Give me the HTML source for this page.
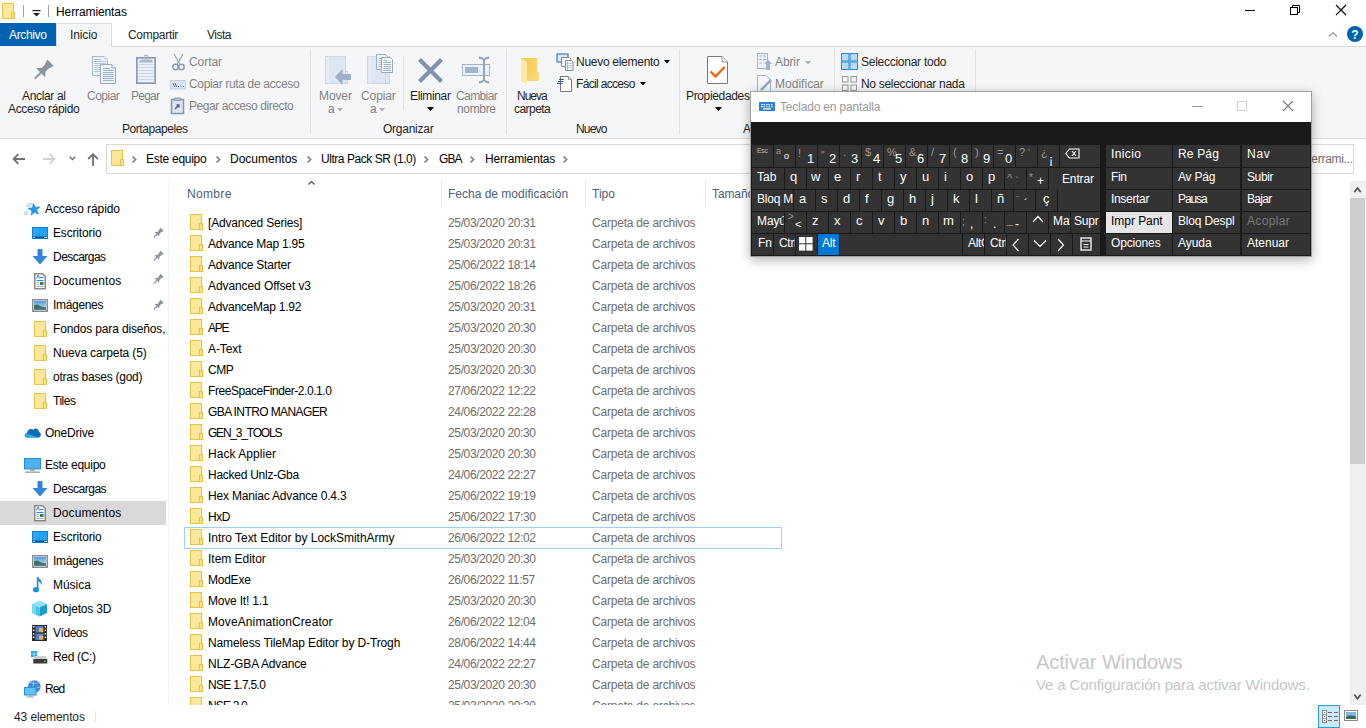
<!DOCTYPE html>
<html><head><meta charset="utf-8"><style>
html,body{margin:0;padding:0;}
body{width:1366px;height:728px;overflow:hidden;position:relative;background:#fff;font-family:"Liberation Sans",sans-serif;}
.t{position:absolute;white-space:nowrap;line-height:1;}
.r{position:absolute;}
.s{position:absolute;overflow:visible;}
</style></head><body>
<svg class="s" style="left:2px;top:3px;" width="13" height="16" viewBox="0 0 13 16"><rect x="0.5" y="0.5" width="11" height="15" fill="#fde89a" stroke="#e8c246"/><rect x="9.5" y="9.5" width="3" height="6" fill="#fde08a" stroke="#e8c246" stroke-width="1"/></svg>
<div class="r" style="left:23px;top:5px;width:1px;height:12px;background:#a0a0a0;"></div>
<svg class="s" style="left:32px;top:10px;" width="9" height="7" viewBox="0 0 9 7"><rect x="0.5" y="0" width="8" height="1.2" fill="#222"/><path d="M1 3 L8 3 L4.5 6.5 Z" fill="#222"/></svg>
<div class="r" style="left:48px;top:5px;width:1px;height:12px;background:#a0a0a0;"></div>
<div class="t" style="left:56px;top:6px;font-size:12px;color:#000;letter-spacing:-0.1px;">Herramientas</div>
<div class="r" style="left:1245px;top:10px;width:10px;height:1px;background:#000;"></div>
<svg class="s" style="left:1289px;top:4px;" width="12" height="12" viewBox="0 0 12 12"><rect x="1.5" y="3.5" width="7" height="7" fill="none" stroke="#000"/><path d="M3.5 3.5 V1.5 H10.5 V8.5 H8.5" fill="none" stroke="#000"/></svg>
<svg class="s" style="left:1335px;top:4px;" width="12" height="12" viewBox="0 0 12 12"><path d="M1 1 L11 11 M11 1 L1 11" stroke="#000" stroke-width="1.1"/></svg>
<div class="r" style="left:0px;top:23px;width:56px;height:23px;background:#0063b1;"></div>
<div class="t" style="left:9px;top:29px;font-size:12px;color:#fff;letter-spacing:-0.35px;">Archivo</div>
<div class="r" style="left:56px;top:23px;width:56px;height:24px;background:#f5f6f7;border:1px solid #dadbdc;border-bottom:none;box-sizing:border-box;"></div>
<div class="t" style="left:70px;top:29px;font-size:12px;color:#262626;letter-spacing:-0.1px;">Inicio</div>
<div class="t" style="left:128px;top:29px;font-size:12px;color:#262626;letter-spacing:-0.3px;">Compartir</div>
<div class="t" style="left:207px;top:29px;font-size:12px;color:#262626;letter-spacing:-0.5px;">Vista</div>
<div class="r" style="left:112px;top:46px;width:1254px;height:1px;background:#dadbdc;"></div>
<svg class="s" style="left:1328px;top:31px;" width="10" height="7" viewBox="0 0 10 7"><path d="M1 5.5 L5 1.5 L9 5.5" fill="none" stroke="#9a9a9a" stroke-width="1.2"/></svg>
<svg class="s" style="left:1347px;top:26px;" width="16" height="16" viewBox="0 0 16 16"><circle cx="8" cy="8" r="8" fill="#0063b1"/><text x="8" y="12.5" font-family="Liberation Sans" font-weight="bold" font-size="12" fill="#fff" text-anchor="middle">?</text></svg>
<div class="r" style="left:0px;top:47px;width:1366px;height:91px;background:#f5f6f7;"></div>
<div class="r" style="left:0px;top:138px;width:1366px;height:1px;background:#dadbdc;"></div>
<div class="r" style="left:310px;top:49px;width:1px;height:85px;background:#e2e3e4;"></div>
<div class="r" style="left:506px;top:49px;width:1px;height:85px;background:#e2e3e4;"></div>
<div class="r" style="left:679px;top:49px;width:1px;height:85px;background:#e2e3e4;"></div>
<div class="r" style="left:834px;top:49px;width:1px;height:85px;background:#e2e3e4;"></div>
<div class="r" style="left:975px;top:49px;width:1px;height:85px;background:#e2e3e4;"></div>
<div class="r" style="left:403px;top:56px;width:1px;height:54px;background:#e2e3e4;"></div>
<svg class="s" style="left:30px;top:56px;" width="26" height="28" viewBox="0 0 26 28"><g transform="translate(4.6 22.8) rotate(45)" fill="#8b959c"><rect x="-1" y="-9.5" width="2" height="9.5" rx="1"/><path d="M-6.3 -8.6 L6.3 -8.6 L2.7 -12.8 L2.7 -16.8 L4.6 -22.6 L-4.6 -22.6 L-2.7 -16.8 L-2.7 -12.8 Z"/></g></svg>
<div class="t" style="left:22px;top:90px;font-size:12px;color:#1f1f1f;letter-spacing:-0.35px;">Anclar al</div>
<div class="t" style="left:8px;top:103px;font-size:12px;color:#1f1f1f;letter-spacing:-0.37px;">Acceso rápido</div>
<svg class="s" style="left:91px;top:55px;" width="27" height="30" viewBox="0 0 27 30"><path d="M1.5 1.5 H13 L16.5 5 V20.5 H1.5 Z" fill="#eef3fa" stroke="#a6b6cf"/><g stroke="#b4c3d9"><path d="M3.5 4.5 H10 M3.5 6.5 H14.5 M3.5 8.5 H14.5 M3.5 10.5 H14.5 M3.5 12.5 H14.5 M3.5 14.5 H14.5 M3.5 16.5 H14.5"/></g><path d="M9.5 9.5 H21 L24.5 13 V28.5 H9.5 Z" fill="#eef3fa" stroke="#97a8c2"/><path d="M21 9.5 V13 H24.5" fill="#fff" stroke="#97a8c2"/><g stroke="#9db0cb"><path d="M12 13.5 H19 M12 15.5 H22.5 M12 17.5 H22.5 M12 19.5 H22.5 M12 21.5 H22.5 M12 23.5 H22.5 M12 25.5 H22.5"/></g></svg>
<div class="t" style="left:87px;top:90px;font-size:12px;color:#838383;letter-spacing:-0.5px;">Copiar</div>
<svg class="s" style="left:135px;top:54px;" width="22" height="31" viewBox="0 0 22 31"><rect x="1.8" y="3.8" width="18.4" height="25.4" fill="#e9eff8" stroke="#8797b3" stroke-width="1.6"/><path d="M4.5 8 H17.5 L16 6 H6 Z" fill="#b9c5d8" stroke="#98a7c0" stroke-width="0.8"/><circle cx="11" cy="3" r="1.8" fill="none" stroke="#a7b4c9" stroke-width="1.2"/><g stroke="#cdd7e6"><path d="M3.5 10.5 H18.5 M3.5 13.5 H18.5 M3.5 16.5 H18.5 M3.5 19.5 H18.5 M3.5 22.5 H18.5 M3.5 25.5 H18.5"/></g></svg>
<div class="t" style="left:131px;top:90px;font-size:12px;color:#838383;letter-spacing:-0.75px;">Pegar</div>
<svg class="s" style="left:171px;top:53px;" width="15" height="18" viewBox="0 0 15 18"><path d="M3 1 L9.5 12 M12 1 L5.5 12" stroke="#9aa6b8" stroke-width="1.3" fill="none"/><circle cx="4.5" cy="14" r="2.7" fill="none" stroke="#8d9bb0" stroke-width="1.5"/><circle cx="10.5" cy="14" r="2.7" fill="none" stroke="#8d9bb0" stroke-width="1.5"/></svg>
<div class="t" style="left:189px;top:56px;font-size:12px;color:#838383;letter-spacing:-0.05px;">Cortar</div>
<svg class="s" style="left:170px;top:80px;" width="16" height="10" viewBox="0 0 16 10"><rect x="0.5" y="0.5" width="15" height="8.5" fill="#dce5f2" stroke="#c0cde0"/><path d="M3 3 L4.5 7 M5 3 L6.5 7" stroke="#58698a" stroke-width="0.9"/><path d="M8 6.5 H9 M10.5 6.5 H11.5 M13 6.5 H14" stroke="#58698a"/></svg>
<div class="t" style="left:189px;top:78px;font-size:12px;color:#838383;letter-spacing:-0.34px;">Copiar ruta de acceso</div>
<svg class="s" style="left:170px;top:97px;" width="16" height="18" viewBox="0 0 16 18"><rect x="1.5" y="2.5" width="12" height="14" fill="#dce4f0" stroke="#8596b0" stroke-width="1.5"/><rect x="4.5" y="1" width="6" height="2.5" fill="#b7c3d6" stroke="#8596b0" stroke-width="0.8"/><path d="M5 12 L9 8 M6.5 8 H9 V10.5" stroke="#4b5e80" stroke-width="1.3" fill="none"/></svg>
<div class="t" style="left:189px;top:100px;font-size:12px;color:#838383;letter-spacing:-0.42px;">Pegar acceso directo</div>
<div class="t" style="left:122px;top:123px;font-size:12px;color:#1f1f1f;letter-spacing:-0.44px;">Portapapeles</div>
<svg class="s" style="left:324px;top:55px;" width="28" height="31" viewBox="0 0 28 31"><rect x="1.5" y="1.5" width="20" height="27" fill="#dde6f2" stroke="#cad7e8"/><path d="M4 2 V28" stroke="#e9eff7" stroke-width="1.5"/><rect x="21.5" y="16.5" width="2" height="12" fill="#dde6f2" stroke="#cad7e8"/><path d="M11 22 L18.5 14 V19 H27 V25 H18.5 V30 Z" fill="#a1b0c8"/></svg>
<div class="t" style="left:319px;top:90px;font-size:12px;color:#838383;letter-spacing:-0.1px;">Mover</div>
<div class="t" style="left:328px;top:103px;font-size:12px;color:#838383;">a</div>
<svg class="s" style="left:337px;top:108px;" width="6" height="4" viewBox="0 0 6 4"><path d="M0 0 H6 L3 3.5 Z" fill="#b0b0b0"/></svg>
<svg class="s" style="left:366px;top:53px;" width="28" height="32" viewBox="0 0 28 32"><rect x="1.5" y="3.5" width="22" height="27" fill="#dde6f2" stroke="#cad7e8"/><path d="M4 4 V30" stroke="#e9eff7" stroke-width="1.5"/><path d="M19.5 4 V30" stroke="#cad7e8"/><path d="M10.5 1.5 H19.5 L21.5 3.5 V16.5 H10.5 Z" fill="#eef3fa" stroke="#9fb0c8"/><g stroke="#b8c6da"><path d="M12.5 5.5 H19 M12.5 7.5 H19 M12.5 9.5 H19 M12.5 11.5 H19 M12.5 13.5 H19"/></g><path d="M15.5 4.5 H24.5 L26.5 6.5 V19.5 H15.5 Z" fill="#f4f7fb" stroke="#97a8c2"/><g stroke="#9db0cb"><path d="M17.5 7.5 H21 M17.5 9.5 H25 M17.5 11.5 H25 M17.5 13.5 H25 M17.5 15.5 H25 M17.5 17.5 H25"/></g></svg>
<div class="t" style="left:361px;top:90px;font-size:12px;color:#838383;letter-spacing:-0.1px;">Copiar</div>
<div class="t" style="left:370px;top:103px;font-size:12px;color:#838383;">a</div>
<svg class="s" style="left:379px;top:108px;" width="6" height="4" viewBox="0 0 6 4"><path d="M0 0 H6 L3 3.5 Z" fill="#b0b0b0"/></svg>
<svg class="s" style="left:417px;top:57px;" width="27" height="27" viewBox="0 0 27 27"><path d="M2.5 2.5 L24.5 24.5 M24.5 2.5 L2.5 24.5" stroke="#8192b0" stroke-width="4.2"/></svg>
<div class="t" style="left:410px;top:90px;font-size:12px;color:#1f1f1f;letter-spacing:-0.35px;">Eliminar</div>
<svg class="s" style="left:427px;top:107px;" width="7" height="4" viewBox="0 0 7 4"><path d="M0 0 H7 L3.5 4 Z" fill="#000"/></svg>
<svg class="s" style="left:461px;top:56px;" width="30" height="28" viewBox="0 0 30 28"><rect x="1.5" y="8.5" width="27" height="11" fill="#eaf1fb" stroke="#a3b3cc"/><rect x="4" y="11" width="13" height="6" fill="#a3b3cc"/><path d="M18 1.5 Q21 1.5 23 4 Q25 1.5 28 1.5 M23 4 V24 M18 26.5 Q21 26.5 23 24 Q25 26.5 28 26.5" stroke="#8d9dba" stroke-width="1.8" fill="none"/></svg>
<div class="t" style="left:456px;top:90px;font-size:12px;color:#838383;letter-spacing:-0.6px;">Cambiar</div>
<div class="t" style="left:457px;top:103px;font-size:12px;color:#838383;letter-spacing:-0.34px;">nombre</div>
<div class="t" style="left:383px;top:123px;font-size:12px;color:#1f1f1f;letter-spacing:-0.25px;">Organizar</div>
<svg class="s" style="left:519px;top:57px;" width="22" height="29" viewBox="0 0 22 29"><defs><linearGradient id="gf" x1="0" y1="0" x2="1" y2="1"><stop offset="0" stop-color="#f3c84e"/><stop offset="1" stop-color="#fbdc7c"/></linearGradient></defs><path d="M2 1 H18 V14 L20 16 V24 H2 Z" fill="url(#gf)"/><path d="M2 1 L8 5 V27.5 L2 24 Z" fill="#fde9a3"/></svg>
<div class="t" style="left:517px;top:90px;font-size:12px;color:#1f1f1f;letter-spacing:-1.0px;">Nueva</div>
<div class="t" style="left:514px;top:103px;font-size:12px;color:#1f1f1f;letter-spacing:-0.55px;">carpeta</div>
<svg class="s" style="left:556px;top:53px;" width="18" height="18" viewBox="0 0 18 18"><rect x="1" y="1" width="11" height="8" fill="#dbe9f6" stroke="#3a7fc0" stroke-width="1.2"/><path d="M5.5 4.5 H13.5 L15 6 V13.5 H5.5 Z" fill="#fff" stroke="#8a8a8a"/><path d="M9.5 7.5 H15.5 L17 9 V17.5 H9.5 Z" fill="#fff" stroke="#8a8a8a"/><path d="M10.5 10.5 H16 M10.5 12.5 H16 M10.5 14.5 H16" stroke="#9cc3ea" stroke-width="0.8"/><path d="M11.5 8.5 V17" stroke="#e88" stroke-width="0.8"/></svg>
<div class="t" style="left:576px;top:56px;font-size:12px;color:#1f1f1f;letter-spacing:-0.28px;">Nuevo elemento</div>
<svg class="s" style="left:664px;top:60px;" width="6" height="4" viewBox="0 0 6 4"><path d="M0 0 H6 L3 3.5 Z" fill="#000"/></svg>
<svg class="s" style="left:556px;top:75px;" width="17" height="18" viewBox="0 0 17 18"><path d="M4.5 1.5 H12.5 L15.5 4.5 V16.5 H4.5 Z" fill="#fff" stroke="#777"/><path d="M12.5 1.5 V4.5 H15.5" fill="#eee" stroke="#999"/><path d="M3 4.5 H8 M2 6.5 H7.5 M1 8.5 H6.5" stroke="#1e5fb4" stroke-width="1.2"/></svg>
<div class="t" style="left:576px;top:78px;font-size:12px;color:#1f1f1f;letter-spacing:-0.67px;">Fácil acceso</div>
<svg class="s" style="left:640px;top:82px;" width="6" height="4" viewBox="0 0 6 4"><path d="M0 0 H6 L3 3.5 Z" fill="#000"/></svg>
<div class="t" style="left:576px;top:123px;font-size:12px;color:#1f1f1f;letter-spacing:-0.8px;">Nuevo</div>
<svg class="s" style="left:707px;top:56px;" width="21" height="28" viewBox="0 0 21 28"><path d="M0.5 0.5 H15 L20.5 6 V27.5 H0.5 Z" fill="#fff" stroke="#7a7a7a"/><path d="M15 0.5 V6 H20.5" fill="#eee" stroke="#9a9a9a"/><path d="M3.5 15.5 L8.5 20.5 L17.5 11" fill="none" stroke="#f7630c" stroke-width="2.4"/></svg>
<div class="t" style="left:686px;top:90px;font-size:12px;color:#1f1f1f;letter-spacing:-0.35px;">Propiedades</div>
<svg class="s" style="left:715px;top:107px;" width="7" height="4" viewBox="0 0 7 4"><path d="M0 0 H7 L3.5 4 Z" fill="#000"/></svg>
<svg class="s" style="left:757px;top:53px;" width="16" height="18" viewBox="0 0 16 18"><rect x="0.5" y="0.5" width="10" height="15" fill="#eef2f7" stroke="#aab6c8"/><path d="M2.5 3 H4.5 M6 3 H9 M2.5 6.5 H4.5 M6 6.5 H9 M2.5 10 H4.5" stroke="#9aa7bb"/><path d="M9 17 V11 H7 L11 6.5 L15 11 H13 V17 Z" fill="#a5b3c8"/></svg>
<div class="t" style="left:775px;top:56px;font-size:12px;color:#838383;letter-spacing:-0.1px;">Abrir</div>
<svg class="s" style="left:805px;top:61px;" width="6" height="4" viewBox="0 0 6 4"><path d="M0 0 H6 L3 3.5 Z" fill="#b0b0b0"/></svg>
<svg class="s" style="left:757px;top:75px;" width="16" height="18" viewBox="0 0 16 18"><path d="M0.5 0.5 H9 L13.5 5 V17.5 H0.5 Z" fill="#f4f6fa" stroke="#aab6c8"/><path d="M4 15 L14 5" stroke="#9aa7bb" stroke-width="2.5"/></svg>
<div class="t" style="left:775px;top:78px;font-size:12px;color:#838383;letter-spacing:0.02px;">Modificar</div>
<div class="t" style="left:743px;top:123px;font-size:12px;color:#1f1f1f;">A</div>
<svg class="s" style="left:841px;top:53px;" width="18" height="18" viewBox="0 0 18 18"><rect x="0.5" y="0.5" width="7.5" height="7.5" fill="#b8dcf8" stroke="#2e8ae0"/><rect x="9" y="0.5" width="7.5" height="7.5" fill="#b8dcf8" stroke="#2e8ae0"/><rect x="0.5" y="9" width="7.5" height="7.5" fill="#b8dcf8" stroke="#2e8ae0"/><rect x="9" y="9" width="7.5" height="7.5" fill="#b8dcf8" stroke="#2e8ae0"/></svg>
<div class="t" style="left:861px;top:56px;font-size:12px;color:#1f1f1f;letter-spacing:-0.26px;">Seleccionar todo</div>
<svg class="s" style="left:841px;top:75px;" width="18" height="18" viewBox="0 0 18 18"><g fill="none" stroke="#9a9a9a"><rect x="1.5" y="1.5" width="5.5" height="5.5"/><rect x="10" y="1.5" width="5.5" height="5.5"/><rect x="1.5" y="10" width="5.5" height="5.5"/><rect x="10" y="10" width="5.5" height="5.5"/></g></svg>
<div class="t" style="left:861px;top:78px;font-size:12px;color:#1f1f1f;letter-spacing:-0.31px;">No seleccionar nada</div>
<svg class="s" style="left:12px;top:152px;" width="15" height="14" viewBox="0 0 15 14"><path d="M6.3 2.2 L1.6 7 L6.3 11.8 M1.6 7 H13" fill="none" stroke="#707070" stroke-width="1.8"/></svg>
<svg class="s" style="left:42px;top:152px;" width="15" height="14" viewBox="0 0 15 14"><path d="M7.7 2.2 L12.4 7 L7.7 11.8 M12.4 7 H1" fill="none" stroke="#d2d2d2" stroke-width="1.8"/></svg>
<svg class="s" style="left:68px;top:155px;" width="9" height="7" viewBox="0 0 9 7"><path d="M1.8 1.8 L4.5 4.5 L7.2 1.8" fill="none" stroke="#707070" stroke-width="1.5"/></svg>
<svg class="s" style="left:86px;top:152px;" width="14" height="15" viewBox="0 0 14 15"><path d="M2.2 7 L7 2.2 L11.8 7 M7 2.2 V14" fill="none" stroke="#707070" stroke-width="1.8"/></svg>
<div class="r" style="left:106px;top:144px;width:1170px;height:30px;background:#fff;border:1px solid #d9d9d9;box-sizing:border-box;"></div>
<svg class="s" style="left:111px;top:150px;" width="13" height="16" viewBox="0 0 13 16"><rect x="0.5" y="0.5" width="11" height="15" fill="#fde89a" stroke="#e8c246"/><rect x="9.5" y="9.5" width="3" height="6" fill="#fde08a" stroke="#e8c246" stroke-width="1"/></svg>
<svg class="s" style="left:131px;top:155px;" width="8" height="9" viewBox="0 0 8 9"><path d="M1.5 1.5 L4.6 4.5 L1.5 7.5" fill="none" stroke="#808080" stroke-width="1.7"/></svg>
<svg class="s" style="left:215px;top:155px;" width="8" height="9" viewBox="0 0 8 9"><path d="M1.5 1.5 L4.6 4.5 L1.5 7.5" fill="none" stroke="#808080" stroke-width="1.7"/></svg>
<svg class="s" style="left:306px;top:155px;" width="8" height="9" viewBox="0 0 8 9"><path d="M1.5 1.5 L4.6 4.5 L1.5 7.5" fill="none" stroke="#808080" stroke-width="1.7"/></svg>
<svg class="s" style="left:423px;top:155px;" width="8" height="9" viewBox="0 0 8 9"><path d="M1.5 1.5 L4.6 4.5 L1.5 7.5" fill="none" stroke="#808080" stroke-width="1.7"/></svg>
<svg class="s" style="left:469px;top:155px;" width="8" height="9" viewBox="0 0 8 9"><path d="M1.5 1.5 L4.6 4.5 L1.5 7.5" fill="none" stroke="#808080" stroke-width="1.7"/></svg>
<svg class="s" style="left:562px;top:155px;" width="8" height="9" viewBox="0 0 8 9"><path d="M1.5 1.5 L4.6 4.5 L1.5 7.5" fill="none" stroke="#808080" stroke-width="1.7"/></svg>
<div class="t" style="left:146px;top:153px;font-size:12px;color:#000;letter-spacing:-0.27px;">Este equipo</div>
<div class="t" style="left:230px;top:153px;font-size:12px;color:#000;letter-spacing:-0.0px;">Documentos</div>
<div class="t" style="left:321px;top:153px;font-size:12px;color:#000;letter-spacing:-0.45px;">Ultra Pack SR (1.0)</div>
<div class="t" style="left:439px;top:153px;font-size:12px;color:#000;letter-spacing:-0.9px;">GBA</div>
<div class="t" style="left:485px;top:153px;font-size:12px;color:#000;letter-spacing:-0.15px;">Herramientas</div>
<div class="r" style="left:1283px;top:144px;width:71px;height:30px;background:#fff;border:1px solid #d9d9d9;box-sizing:border-box;"></div>
<div class="t" style="left:1303px;top:153px;font-size:12px;color:#6d6d6d;letter-spacing:-0.3px;">Herrami...</div>
<div class="r" style="left:0px;top:501px;width:166px;height:24px;background:#d9d9d9;"></div>
<div class="r" style="left:168px;top:181px;width:1px;height:524px;background:#f3f3f3;"></div>
<svg class="s" style="left:24px;top:201px;" width="17" height="15" viewBox="0 0 17 15"><path d="M9.32 2.36 L11.42 6.30 L15.86 5.84 L12.76 9.05 L14.58 13.13 L10.56 11.17 L7.24 14.16 L7.86 9.74 L4.00 7.51 L8.39 6.73 Z" fill="#1f9bf0" stroke="#1a86d6" stroke-width="0.6"/><path d="M3 3 H8 M2 5 H6.5 M0.5 11 H4.5 M0 13 H4" stroke="#7cc4f4" stroke-width="0.9"/></svg>
<div class="t" style="left:45px;top:203px;font-size:12px;color:#000;letter-spacing:-0.09px;">Acceso rápido</div>
<svg class="s" style="left:32px;top:227px;" width="16" height="13" viewBox="0 0 16 13"><rect x="0.5" y="0.5" width="15" height="11" fill="#1ea2f6" stroke="#137fd0"/><path d="M1 1 L8 1 L3 11 H1 Z" fill="#3cb0f8" opacity="0.5"/><rect x="1" y="9.5" width="14" height="2" fill="#0b5a9c"/><g fill="#fff"><rect x="1.5" y="10" width="1" height="1"/><rect x="12.5" y="10" width="1" height="1"/><rect x="14" y="10" width="1" height="1"/></g></svg>
<div class="t" style="left:53px;top:227px;font-size:12px;color:#000;letter-spacing:-0.16px;">Escritorio</div>
<svg class="s" style="left:153px;top:228px;" width="11" height="11" viewBox="0 0 11 11"><g transform="translate(0.7 9.6) rotate(45) scale(0.52)" fill="#8b959c"><rect x="-1.1" y="-9.5" width="2.2" height="9.5" rx="1"/><path d="M-6.3 -8.6 L6.3 -8.6 L2.7 -12.8 L2.7 -16.8 L4.6 -22.6 L-4.6 -22.6 L-2.7 -16.8 L-2.7 -12.8 Z"/></g></svg>
<svg class="s" style="left:32px;top:249px;" width="16" height="16" viewBox="0 0 16 16"><path d="M5.5 0 H10.5 V7 H15.5 L8 15.5 L0.5 7 H5.5 Z" fill="#2f86da"/></svg>
<div class="t" style="left:53px;top:251px;font-size:12px;color:#000;letter-spacing:-0.53px;">Descargas</div>
<svg class="s" style="left:153px;top:251px;" width="11" height="11" viewBox="0 0 11 11"><g transform="translate(0.7 9.6) rotate(45) scale(0.52)" fill="#8b959c"><rect x="-1.1" y="-9.5" width="2.2" height="9.5" rx="1"/><path d="M-6.3 -8.6 L6.3 -8.6 L2.7 -12.8 L2.7 -16.8 L4.6 -22.6 L-4.6 -22.6 L-2.7 -16.8 L-2.7 -12.8 Z"/></g></svg>
<svg class="s" style="left:34px;top:273px;" width="12" height="17" viewBox="0 0 12 17"><path d="M0.75 0.75 H8.5 L11.25 3.5 V15.75 H0.75 Z" fill="#fff" stroke="#8a8a8a" stroke-width="1.5"/><path d="M2.5 5.5 L4 2 L5.5 5.5" fill="none" stroke="#1e88e5" stroke-width="1"/><path d="M6 4.5 H9.5" stroke="#1e88e5"/><path d="M2.5 7.5 H9.5" stroke="#1e88e5" stroke-width="1.1"/><path d="M2.5 9.5 H5 M2.5 11.5 H5 M2.5 13.5 H9.5" stroke="#aaa"/><rect x="6" y="9" width="3.5" height="3" fill="#3f7a5a"/></svg>
<div class="t" style="left:53px;top:275px;font-size:12px;color:#000;letter-spacing:0.1px;">Documentos</div>
<svg class="s" style="left:153px;top:274px;" width="11" height="11" viewBox="0 0 11 11"><g transform="translate(0.7 9.6) rotate(45) scale(0.52)" fill="#8b959c"><rect x="-1.1" y="-9.5" width="2.2" height="9.5" rx="1"/><path d="M-6.3 -8.6 L6.3 -8.6 L2.7 -12.8 L2.7 -16.8 L4.6 -22.6 L-4.6 -22.6 L-2.7 -16.8 L-2.7 -12.8 Z"/></g></svg>
<svg class="s" style="left:32px;top:299px;" width="16" height="13" viewBox="0 0 16 13"><rect x="0.75" y="0.75" width="14.5" height="11.5" fill="#fff" stroke="#8a8a8a" stroke-width="1.5"/><defs><linearGradient id="sky" x1="0" y1="0" x2="0" y2="1"><stop offset="0" stop-color="#4a9be8"/><stop offset="1" stop-color="#d8ecf8"/></linearGradient></defs><rect x="2" y="2" width="12" height="9" fill="url(#sky)"/><path d="M2 6.5 Q5 4.5 8 7 Q11 8.5 14 8 V11 H2 Z" fill="#3f7752"/><rect x="2" y="9.5" width="12" height="1.5" fill="#4a78b0"/></svg>
<div class="t" style="left:53px;top:299px;font-size:12px;color:#000;letter-spacing:-0.32px;">Imágenes</div>
<svg class="s" style="left:153px;top:300px;" width="11" height="11" viewBox="0 0 11 11"><g transform="translate(0.7 9.6) rotate(45) scale(0.52)" fill="#8b959c"><rect x="-1.1" y="-9.5" width="2.2" height="9.5" rx="1"/><path d="M-6.3 -8.6 L6.3 -8.6 L2.7 -12.8 L2.7 -16.8 L4.6 -22.6 L-4.6 -22.6 L-2.7 -16.8 L-2.7 -12.8 Z"/></g></svg>
<svg class="s" style="left:34px;top:321px;" width="13" height="16" viewBox="0 0 13 16"><rect x="0.5" y="0.5" width="11" height="15" fill="#fde89a" stroke="#e8c246"/><rect x="9.5" y="9.5" width="3" height="6" fill="#fde08a" stroke="#e8c246" stroke-width="1"/></svg>
<div class="t" style="left:53px;top:323px;font-size:12px;color:#000;letter-spacing:-0.15px;">Fondos para diseños,</div>
<svg class="s" style="left:34px;top:345px;" width="13" height="16" viewBox="0 0 13 16"><rect x="0.5" y="0.5" width="11" height="15" fill="#fde89a" stroke="#e8c246"/><rect x="9.5" y="9.5" width="3" height="6" fill="#fde08a" stroke="#e8c246" stroke-width="1"/></svg>
<div class="t" style="left:53px;top:347px;font-size:12px;color:#000;letter-spacing:-0.15px;">Nueva carpeta (5)</div>
<svg class="s" style="left:34px;top:369px;" width="13" height="16" viewBox="0 0 13 16"><rect x="0.5" y="0.5" width="11" height="15" fill="#fde89a" stroke="#e8c246"/><rect x="9.5" y="9.5" width="3" height="6" fill="#fde08a" stroke="#e8c246" stroke-width="1"/></svg>
<div class="t" style="left:53px;top:371px;font-size:12px;color:#000;letter-spacing:-0.24px;">otras bases (god)</div>
<svg class="s" style="left:34px;top:393px;" width="13" height="16" viewBox="0 0 13 16"><rect x="0.5" y="0.5" width="11" height="15" fill="#fde89a" stroke="#e8c246"/><rect x="9.5" y="9.5" width="3" height="6" fill="#fde08a" stroke="#e8c246" stroke-width="1"/></svg>
<div class="t" style="left:53px;top:395px;font-size:12px;color:#000;letter-spacing:-0.5px;">Tiles</div>
<svg class="s" style="left:24px;top:427px;" width="17" height="11" viewBox="0 0 17 11"><path d="M3 10.5 C0 10.5 0 6 3 6 C3.5 2.5 7 1 9.5 2.8 C11 0.5 15 1.5 15 5 C17.5 5.5 17.5 10.5 14.5 10.5 Z" fill="#0f6cbd"/><path d="M3 10.5 C0 10.5 0 6.5 3 6.5 L14.5 10.5 Z" fill="#28a8ea"/></svg>
<div class="t" style="left:45px;top:427px;font-size:12px;color:#000;letter-spacing:-0.23px;">OneDrive</div>
<svg class="s" style="left:24px;top:458px;" width="17" height="15" viewBox="0 0 17 15"><rect x="0.5" y="0.5" width="16" height="10.5" fill="#4cb2f0" stroke="#2b8fd6"/><rect x="6" y="11" width="5" height="2" fill="#aaa"/><rect x="1" y="13.5" width="15" height="1.3" fill="#8a9fb3"/></svg>
<div class="t" style="left:45px;top:459px;font-size:12px;color:#000;letter-spacing:-0.26px;">Este equipo</div>
<svg class="s" style="left:32px;top:481px;" width="16" height="16" viewBox="0 0 16 16"><path d="M5.5 0 H10.5 V7 H15.5 L8 15.5 L0.5 7 H5.5 Z" fill="#2f86da"/></svg>
<div class="t" style="left:53px;top:483px;font-size:12px;color:#000;letter-spacing:-0.47px;">Descargas</div>
<svg class="s" style="left:34px;top:505px;" width="12" height="17" viewBox="0 0 12 17"><path d="M0.75 0.75 H8.5 L11.25 3.5 V15.75 H0.75 Z" fill="#fff" stroke="#8a8a8a" stroke-width="1.5"/><path d="M2.5 5.5 L4 2 L5.5 5.5" fill="none" stroke="#1e88e5" stroke-width="1"/><path d="M6 4.5 H9.5" stroke="#1e88e5"/><path d="M2.5 7.5 H9.5" stroke="#1e88e5" stroke-width="1.1"/><path d="M2.5 9.5 H5 M2.5 11.5 H5 M2.5 13.5 H9.5" stroke="#aaa"/><rect x="6" y="9" width="3.5" height="3" fill="#3f7a5a"/></svg>
<div class="t" style="left:53px;top:507px;font-size:12px;color:#000;letter-spacing:0.1px;">Documentos</div>
<svg class="s" style="left:32px;top:531px;" width="16" height="13" viewBox="0 0 16 13"><rect x="0.5" y="0.5" width="15" height="11" fill="#1ea2f6" stroke="#137fd0"/><path d="M1 1 L8 1 L3 11 H1 Z" fill="#3cb0f8" opacity="0.5"/><rect x="1" y="9.5" width="14" height="2" fill="#0b5a9c"/><g fill="#fff"><rect x="1.5" y="10" width="1" height="1"/><rect x="12.5" y="10" width="1" height="1"/><rect x="14" y="10" width="1" height="1"/></g></svg>
<div class="t" style="left:53px;top:531px;font-size:12px;color:#000;letter-spacing:-0.14px;">Escritorio</div>
<svg class="s" style="left:32px;top:555px;" width="16" height="13" viewBox="0 0 16 13"><rect x="0.75" y="0.75" width="14.5" height="11.5" fill="#fff" stroke="#8a8a8a" stroke-width="1.5"/><defs><linearGradient id="sky" x1="0" y1="0" x2="0" y2="1"><stop offset="0" stop-color="#4a9be8"/><stop offset="1" stop-color="#d8ecf8"/></linearGradient></defs><rect x="2" y="2" width="12" height="9" fill="url(#sky)"/><path d="M2 6.5 Q5 4.5 8 7 Q11 8.5 14 8 V11 H2 Z" fill="#3f7752"/><rect x="2" y="9.5" width="12" height="1.5" fill="#4a78b0"/></svg>
<div class="t" style="left:53px;top:555px;font-size:12px;color:#000;letter-spacing:-0.32px;">Imágenes</div>
<svg class="s" style="left:33px;top:576px;" width="10" height="17" viewBox="0 0 10 17"><path d="M4.6 1 V13.5" stroke="#1a8fe8" stroke-width="1.6"/><path d="M4.5 0.8 C6 3 9.5 4 8.8 9.5 C8 6.8 6.5 5.8 4.5 5.2 Z" fill="#1a8fe8"/><ellipse cx="3" cy="13.7" rx="3" ry="2.6" fill="#1a8fe8"/></svg>
<div class="t" style="left:53px;top:579px;font-size:12px;color:#000;letter-spacing:-0.04px;">Música</div>
<svg class="s" style="left:31px;top:600px;" width="17" height="17" viewBox="0 0 17 17"><path d="M8.5 0.5 L16 4 L8.5 7.5 L1 4 Z" fill="#8fe1f5"/><path d="M1 4 L8.5 7.5 V16.5 L1 13 Z" fill="#45c6e6"/><path d="M8.5 7.5 L16 4 V13 L8.5 16.5 Z" fill="#1a9bcb"/><path d="M1 4 L5 5.8 V14.8 L1 13 Z" fill="#a8e8f6" opacity="0.5"/></svg>
<div class="t" style="left:53px;top:603px;font-size:12px;color:#000;letter-spacing:-0.18px;">Objetos 3D</div>
<svg class="s" style="left:32px;top:625px;" width="15" height="16" viewBox="0 0 15 16"><rect x="0" y="0" width="15" height="16" fill="#2a2a2a"/><g fill="#f0f0f0"><rect x="0.8" y="1" width="1.6" height="1.6"/><rect x="0.8" y="4.5" width="1.6" height="1.6"/><rect x="0.8" y="8" width="1.6" height="1.6"/><rect x="0.8" y="11.5" width="1.6" height="1.6"/><rect x="12.6" y="1" width="1.6" height="1.6"/><rect x="12.6" y="4.5" width="1.6" height="1.6"/><rect x="12.6" y="8" width="1.6" height="1.6"/><rect x="12.6" y="11.5" width="1.6" height="1.6"/></g><rect x="3.5" y="1" width="8" height="6.5" fill="#4f7fd0"/><rect x="3.5" y="8.5" width="8" height="6.5" fill="#4f7fd0"/><path d="M7 3 H11 V7 H7 Z M7 10.5 H11 V14.5 H7 Z" fill="#e8b830"/></svg>
<div class="t" style="left:53px;top:627px;font-size:12px;color:#000;letter-spacing:-0.46px;">Vídeos</div>
<svg class="s" style="left:31px;top:651px;" width="17" height="13" viewBox="0 0 17 13"><g fill="#19a9ee"><rect x="0" y="0" width="2.8" height="2.8"/><rect x="3.3" y="0" width="2.8" height="2.8"/><rect x="0" y="3.3" width="2.8" height="2.8"/><rect x="3.3" y="3.3" width="2.8" height="2.8"/></g><path d="M3.5 5 H15 L16.3 8 H2.3 Z" fill="#cfcfcf"/><rect x="2.3" y="8" width="14" height="4.5" fill="#3c3c3c"/><rect x="13" y="9.6" width="1.6" height="1.3" fill="#2ecc40"/></svg>
<div class="t" style="left:53px;top:651px;font-size:12px;color:#000;letter-spacing:-0.34px;">Red (C:)</div>
<svg class="s" style="left:24px;top:680px;" width="17" height="18" viewBox="0 0 17 18"><circle cx="10.3" cy="6.5" r="6.3" fill="#3b87d4"/><path d="M6 2.5 Q10 5 14.5 2.8 M5 7 Q10 9.5 16 7 M10 0.5 Q7.5 6.5 10.5 12.5" stroke="#a7d6f7" stroke-width="0.8" fill="none"/><rect x="0.5" y="7.5" width="11.5" height="7.5" fill="#5ec3f2" stroke="#2f8fd6"/><rect x="4.5" y="15.5" width="3.5" height="1" fill="#8aa"/><rect x="2.5" y="16.5" width="7.5" height="1" fill="#9ab"/></svg>
<div class="t" style="left:45px;top:683px;font-size:12px;color:#000;letter-spacing:-0.9px;">Red</div>
<div class="t" style="left:187px;top:188px;font-size:12px;color:#4c607a;letter-spacing:0.34px;">Nombre</div>
<svg class="s" style="left:307px;top:180px;" width="10" height="7" viewBox="0 0 10 7"><path d="M1.5 4.5 L4.5 1.5 L7.5 4.5" fill="none" stroke="#4a4a4a" stroke-width="1.1"/></svg>
<div class="r" style="left:441px;top:181px;width:1px;height:25px;background:#e5e5e5;"></div>
<div class="t" style="left:448px;top:188px;font-size:12px;color:#4c607a;letter-spacing:0px;">Fecha de modificación</div>
<div class="r" style="left:585px;top:181px;width:1px;height:25px;background:#e5e5e5;"></div>
<div class="t" style="left:592px;top:188px;font-size:12px;color:#4c607a;letter-spacing:0px;">Tipo</div>
<div class="r" style="left:705px;top:181px;width:1px;height:25px;background:#e5e5e5;"></div>
<div class="t" style="left:712px;top:188px;font-size:12px;color:#4c607a;letter-spacing:-0.1px;">Tamaño</div>
<div class="r" style="left:170px;top:206px;width:1179px;height:499px;overflow:hidden">
<svg class="s" style="left:20px;top:8px;" width="13" height="16" viewBox="0 0 13 16"><rect x="0.5" y="0.5" width="11" height="15" fill="#fde89a" stroke="#e8c246"/><rect x="9.5" y="9.5" width="3" height="6" fill="#fde08a" stroke="#e8c246" stroke-width="1"/></svg>
<div class="t" style="left:38px;top:11px;font-size:12px;color:#000;letter-spacing:-0.19px;">[Advanced Series]</div>
<div class="t" style="left:278px;top:11px;font-size:12px;color:#6d6d6d;letter-spacing:-0.36px;">25/03/2020 20:31</div>
<div class="t" style="left:422px;top:11px;font-size:12px;color:#6d6d6d;letter-spacing:-0.21px;">Carpeta de archivos</div>
<svg class="s" style="left:20px;top:29px;" width="13" height="16" viewBox="0 0 13 16"><rect x="0.5" y="0.5" width="11" height="15" fill="#fde89a" stroke="#e8c246"/><rect x="9.5" y="9.5" width="3" height="6" fill="#fde08a" stroke="#e8c246" stroke-width="1"/></svg>
<div class="t" style="left:38px;top:32px;font-size:12px;color:#000;letter-spacing:-0.23px;">Advance Map 1.95</div>
<div class="t" style="left:278px;top:32px;font-size:12px;color:#6d6d6d;letter-spacing:-0.36px;">25/03/2020 20:31</div>
<div class="t" style="left:422px;top:32px;font-size:12px;color:#6d6d6d;letter-spacing:-0.21px;">Carpeta de archivos</div>
<svg class="s" style="left:20px;top:50px;" width="13" height="16" viewBox="0 0 13 16"><rect x="0.5" y="0.5" width="11" height="15" fill="#fde89a" stroke="#e8c246"/><rect x="9.5" y="9.5" width="3" height="6" fill="#fde08a" stroke="#e8c246" stroke-width="1"/></svg>
<div class="t" style="left:38px;top:53px;font-size:12px;color:#000;letter-spacing:-0.22px;">Advance Starter</div>
<div class="t" style="left:278px;top:53px;font-size:12px;color:#6d6d6d;letter-spacing:-0.36px;">25/06/2022 18:14</div>
<div class="t" style="left:422px;top:53px;font-size:12px;color:#6d6d6d;letter-spacing:-0.21px;">Carpeta de archivos</div>
<svg class="s" style="left:20px;top:71px;" width="13" height="16" viewBox="0 0 13 16"><rect x="0.5" y="0.5" width="11" height="15" fill="#fde89a" stroke="#e8c246"/><rect x="9.5" y="9.5" width="3" height="6" fill="#fde08a" stroke="#e8c246" stroke-width="1"/></svg>
<div class="t" style="left:38px;top:74px;font-size:12px;color:#000;letter-spacing:-0.09px;">Advanced Offset v3</div>
<div class="t" style="left:278px;top:74px;font-size:12px;color:#6d6d6d;letter-spacing:-0.36px;">25/06/2022 18:26</div>
<div class="t" style="left:422px;top:74px;font-size:12px;color:#6d6d6d;letter-spacing:-0.21px;">Carpeta de archivos</div>
<svg class="s" style="left:20px;top:92px;" width="13" height="16" viewBox="0 0 13 16"><rect x="0.5" y="0.5" width="11" height="15" fill="#fde89a" stroke="#e8c246"/><rect x="9.5" y="9.5" width="3" height="6" fill="#fde08a" stroke="#e8c246" stroke-width="1"/></svg>
<div class="t" style="left:38px;top:95px;font-size:12px;color:#000;letter-spacing:-0.24px;">AdvanceMap 1.92</div>
<div class="t" style="left:278px;top:95px;font-size:12px;color:#6d6d6d;letter-spacing:-0.36px;">25/03/2020 20:31</div>
<div class="t" style="left:422px;top:95px;font-size:12px;color:#6d6d6d;letter-spacing:-0.21px;">Carpeta de archivos</div>
<svg class="s" style="left:20px;top:113px;" width="13" height="16" viewBox="0 0 13 16"><rect x="0.5" y="0.5" width="11" height="15" fill="#fde89a" stroke="#e8c246"/><rect x="9.5" y="9.5" width="3" height="6" fill="#fde08a" stroke="#e8c246" stroke-width="1"/></svg>
<div class="t" style="left:38px;top:116px;font-size:12px;color:#000;letter-spacing:-1.3px;">APE</div>
<div class="t" style="left:278px;top:116px;font-size:12px;color:#6d6d6d;letter-spacing:-0.36px;">25/03/2020 20:30</div>
<div class="t" style="left:422px;top:116px;font-size:12px;color:#6d6d6d;letter-spacing:-0.21px;">Carpeta de archivos</div>
<svg class="s" style="left:20px;top:134px;" width="13" height="16" viewBox="0 0 13 16"><rect x="0.5" y="0.5" width="11" height="15" fill="#fde89a" stroke="#e8c246"/><rect x="9.5" y="9.5" width="3" height="6" fill="#fde08a" stroke="#e8c246" stroke-width="1"/></svg>
<div class="t" style="left:38px;top:137px;font-size:12px;color:#000;letter-spacing:-0.1px;">A-Text</div>
<div class="t" style="left:278px;top:137px;font-size:12px;color:#6d6d6d;letter-spacing:-0.36px;">25/03/2020 20:30</div>
<div class="t" style="left:422px;top:137px;font-size:12px;color:#6d6d6d;letter-spacing:-0.21px;">Carpeta de archivos</div>
<svg class="s" style="left:20px;top:155px;" width="13" height="16" viewBox="0 0 13 16"><rect x="0.5" y="0.5" width="11" height="15" fill="#fde89a" stroke="#e8c246"/><rect x="9.5" y="9.5" width="3" height="6" fill="#fde08a" stroke="#e8c246" stroke-width="1"/></svg>
<div class="t" style="left:38px;top:158px;font-size:12px;color:#000;letter-spacing:-0.45px;">CMP</div>
<div class="t" style="left:278px;top:158px;font-size:12px;color:#6d6d6d;letter-spacing:-0.36px;">25/03/2020 20:30</div>
<div class="t" style="left:422px;top:158px;font-size:12px;color:#6d6d6d;letter-spacing:-0.21px;">Carpeta de archivos</div>
<svg class="s" style="left:20px;top:176px;" width="13" height="16" viewBox="0 0 13 16"><rect x="0.5" y="0.5" width="11" height="15" fill="#fde89a" stroke="#e8c246"/><rect x="9.5" y="9.5" width="3" height="6" fill="#fde08a" stroke="#e8c246" stroke-width="1"/></svg>
<div class="t" style="left:38px;top:179px;font-size:12px;color:#000;letter-spacing:-0.43px;">FreeSpaceFinder-2.0.1.0</div>
<div class="t" style="left:278px;top:179px;font-size:12px;color:#6d6d6d;letter-spacing:-0.36px;">27/06/2022 12:22</div>
<div class="t" style="left:422px;top:179px;font-size:12px;color:#6d6d6d;letter-spacing:-0.21px;">Carpeta de archivos</div>
<svg class="s" style="left:20px;top:197px;" width="13" height="16" viewBox="0 0 13 16"><rect x="0.5" y="0.5" width="11" height="15" fill="#fde89a" stroke="#e8c246"/><rect x="9.5" y="9.5" width="3" height="6" fill="#fde08a" stroke="#e8c246" stroke-width="1"/></svg>
<div class="t" style="left:38px;top:200px;font-size:12px;color:#000;letter-spacing:-0.6px;">GBA INTRO MANAGER</div>
<div class="t" style="left:278px;top:200px;font-size:12px;color:#6d6d6d;letter-spacing:-0.36px;">24/06/2022 22:28</div>
<div class="t" style="left:422px;top:200px;font-size:12px;color:#6d6d6d;letter-spacing:-0.21px;">Carpeta de archivos</div>
<svg class="s" style="left:20px;top:218px;" width="13" height="16" viewBox="0 0 13 16"><rect x="0.5" y="0.5" width="11" height="15" fill="#fde89a" stroke="#e8c246"/><rect x="9.5" y="9.5" width="3" height="6" fill="#fde08a" stroke="#e8c246" stroke-width="1"/></svg>
<div class="t" style="left:38px;top:221px;font-size:12px;color:#000;letter-spacing:-1.21px;">GEN_3_TOOLS</div>
<div class="t" style="left:278px;top:221px;font-size:12px;color:#6d6d6d;letter-spacing:-0.36px;">25/03/2020 20:30</div>
<div class="t" style="left:422px;top:221px;font-size:12px;color:#6d6d6d;letter-spacing:-0.21px;">Carpeta de archivos</div>
<svg class="s" style="left:20px;top:239px;" width="13" height="16" viewBox="0 0 13 16"><rect x="0.5" y="0.5" width="11" height="15" fill="#fde89a" stroke="#e8c246"/><rect x="9.5" y="9.5" width="3" height="6" fill="#fde08a" stroke="#e8c246" stroke-width="1"/></svg>
<div class="t" style="left:38px;top:242px;font-size:12px;color:#000;letter-spacing:0.05px;">Hack Applier</div>
<div class="t" style="left:278px;top:242px;font-size:12px;color:#6d6d6d;letter-spacing:-0.36px;">25/03/2020 20:30</div>
<div class="t" style="left:422px;top:242px;font-size:12px;color:#6d6d6d;letter-spacing:-0.21px;">Carpeta de archivos</div>
<svg class="s" style="left:20px;top:260px;" width="13" height="16" viewBox="0 0 13 16"><rect x="0.5" y="0.5" width="11" height="15" fill="#fde89a" stroke="#e8c246"/><rect x="9.5" y="9.5" width="3" height="6" fill="#fde08a" stroke="#e8c246" stroke-width="1"/></svg>
<div class="t" style="left:38px;top:263px;font-size:12px;color:#000;letter-spacing:-0.26px;">Hacked Unlz-Gba</div>
<div class="t" style="left:278px;top:263px;font-size:12px;color:#6d6d6d;letter-spacing:-0.36px;">24/06/2022 22:27</div>
<div class="t" style="left:422px;top:263px;font-size:12px;color:#6d6d6d;letter-spacing:-0.21px;">Carpeta de archivos</div>
<svg class="s" style="left:20px;top:281px;" width="13" height="16" viewBox="0 0 13 16"><rect x="0.5" y="0.5" width="11" height="15" fill="#fde89a" stroke="#e8c246"/><rect x="9.5" y="9.5" width="3" height="6" fill="#fde08a" stroke="#e8c246" stroke-width="1"/></svg>
<div class="t" style="left:38px;top:284px;font-size:12px;color:#000;letter-spacing:-0.18px;">Hex Maniac Advance 0.4.3</div>
<div class="t" style="left:278px;top:284px;font-size:12px;color:#6d6d6d;letter-spacing:-0.36px;">25/06/2022 19:19</div>
<div class="t" style="left:422px;top:284px;font-size:12px;color:#6d6d6d;letter-spacing:-0.21px;">Carpeta de archivos</div>
<svg class="s" style="left:20px;top:302px;" width="13" height="16" viewBox="0 0 13 16"><rect x="0.5" y="0.5" width="11" height="15" fill="#fde89a" stroke="#e8c246"/><rect x="9.5" y="9.5" width="3" height="6" fill="#fde08a" stroke="#e8c246" stroke-width="1"/></svg>
<div class="t" style="left:38px;top:305px;font-size:12px;color:#000;letter-spacing:-0.45px;">HxD</div>
<div class="t" style="left:278px;top:305px;font-size:12px;color:#6d6d6d;letter-spacing:-0.36px;">25/06/2022 17:30</div>
<div class="t" style="left:422px;top:305px;font-size:12px;color:#6d6d6d;letter-spacing:-0.21px;">Carpeta de archivos</div>
<div class="r" style="left:14px;top:321px;width:598px;height:22px;background:transparent;border:1px solid #99d1ff;box-sizing:border-box;"></div>
<svg class="s" style="left:20px;top:323px;" width="13" height="16" viewBox="0 0 13 16"><rect x="0.5" y="0.5" width="11" height="15" fill="#fde89a" stroke="#e8c246"/><rect x="9.5" y="9.5" width="3" height="6" fill="#fde08a" stroke="#e8c246" stroke-width="1"/></svg>
<div class="t" style="left:38px;top:326px;font-size:12px;color:#000;letter-spacing:-0.02px;">Intro Text Editor by LockSmithArmy</div>
<div class="t" style="left:278px;top:326px;font-size:12px;color:#6d6d6d;letter-spacing:-0.36px;">26/06/2022 12:02</div>
<div class="t" style="left:422px;top:326px;font-size:12px;color:#6d6d6d;letter-spacing:-0.21px;">Carpeta de archivos</div>
<svg class="s" style="left:20px;top:344px;" width="13" height="16" viewBox="0 0 13 16"><rect x="0.5" y="0.5" width="11" height="15" fill="#fde89a" stroke="#e8c246"/><rect x="9.5" y="9.5" width="3" height="6" fill="#fde08a" stroke="#e8c246" stroke-width="1"/></svg>
<div class="t" style="left:38px;top:347px;font-size:12px;color:#000;letter-spacing:-0.02px;">Item Editor</div>
<div class="t" style="left:278px;top:347px;font-size:12px;color:#6d6d6d;letter-spacing:-0.36px;">25/03/2020 20:30</div>
<div class="t" style="left:422px;top:347px;font-size:12px;color:#6d6d6d;letter-spacing:-0.21px;">Carpeta de archivos</div>
<svg class="s" style="left:20px;top:365px;" width="13" height="16" viewBox="0 0 13 16"><rect x="0.5" y="0.5" width="11" height="15" fill="#fde89a" stroke="#e8c246"/><rect x="9.5" y="9.5" width="3" height="6" fill="#fde08a" stroke="#e8c246" stroke-width="1"/></svg>
<div class="t" style="left:38px;top:368px;font-size:12px;color:#000;letter-spacing:-0.24px;">ModExe</div>
<div class="t" style="left:278px;top:368px;font-size:12px;color:#6d6d6d;letter-spacing:-0.36px;">26/06/2022 11:57</div>
<div class="t" style="left:422px;top:368px;font-size:12px;color:#6d6d6d;letter-spacing:-0.21px;">Carpeta de archivos</div>
<svg class="s" style="left:20px;top:386px;" width="13" height="16" viewBox="0 0 13 16"><rect x="0.5" y="0.5" width="11" height="15" fill="#fde89a" stroke="#e8c246"/><rect x="9.5" y="9.5" width="3" height="6" fill="#fde08a" stroke="#e8c246" stroke-width="1"/></svg>
<div class="t" style="left:38px;top:389px;font-size:12px;color:#000;letter-spacing:-0.19px;">Move It! 1.1</div>
<div class="t" style="left:278px;top:389px;font-size:12px;color:#6d6d6d;letter-spacing:-0.36px;">25/03/2020 20:30</div>
<div class="t" style="left:422px;top:389px;font-size:12px;color:#6d6d6d;letter-spacing:-0.21px;">Carpeta de archivos</div>
<svg class="s" style="left:20px;top:407px;" width="13" height="16" viewBox="0 0 13 16"><rect x="0.5" y="0.5" width="11" height="15" fill="#fde89a" stroke="#e8c246"/><rect x="9.5" y="9.5" width="3" height="6" fill="#fde08a" stroke="#e8c246" stroke-width="1"/></svg>
<div class="t" style="left:38px;top:410px;font-size:12px;color:#000;letter-spacing:0.1px;">MoveAnimationCreator</div>
<div class="t" style="left:278px;top:410px;font-size:12px;color:#6d6d6d;letter-spacing:-0.36px;">26/06/2022 12:04</div>
<div class="t" style="left:422px;top:410px;font-size:12px;color:#6d6d6d;letter-spacing:-0.21px;">Carpeta de archivos</div>
<svg class="s" style="left:20px;top:428px;" width="13" height="16" viewBox="0 0 13 16"><rect x="0.5" y="0.5" width="11" height="15" fill="#fde89a" stroke="#e8c246"/><rect x="9.5" y="9.5" width="3" height="6" fill="#fde08a" stroke="#e8c246" stroke-width="1"/></svg>
<div class="t" style="left:38px;top:431px;font-size:12px;color:#000;letter-spacing:-0.12px;">Nameless TileMap Editor by D-Trogh</div>
<div class="t" style="left:278px;top:431px;font-size:12px;color:#6d6d6d;letter-spacing:-0.36px;">28/06/2022 14:44</div>
<div class="t" style="left:422px;top:431px;font-size:12px;color:#6d6d6d;letter-spacing:-0.21px;">Carpeta de archivos</div>
<svg class="s" style="left:20px;top:449px;" width="13" height="16" viewBox="0 0 13 16"><rect x="0.5" y="0.5" width="11" height="15" fill="#fde89a" stroke="#e8c246"/><rect x="9.5" y="9.5" width="3" height="6" fill="#fde08a" stroke="#e8c246" stroke-width="1"/></svg>
<div class="t" style="left:38px;top:452px;font-size:12px;color:#000;letter-spacing:-0.14px;">NLZ-GBA Advance</div>
<div class="t" style="left:278px;top:452px;font-size:12px;color:#6d6d6d;letter-spacing:-0.36px;">24/06/2022 22:27</div>
<div class="t" style="left:422px;top:452px;font-size:12px;color:#6d6d6d;letter-spacing:-0.21px;">Carpeta de archivos</div>
<svg class="s" style="left:20px;top:470px;" width="13" height="16" viewBox="0 0 13 16"><rect x="0.5" y="0.5" width="11" height="15" fill="#fde89a" stroke="#e8c246"/><rect x="9.5" y="9.5" width="3" height="6" fill="#fde08a" stroke="#e8c246" stroke-width="1"/></svg>
<div class="t" style="left:38px;top:473px;font-size:12px;color:#000;letter-spacing:-0.69px;">NSE 1.7.5.0</div>
<div class="t" style="left:278px;top:473px;font-size:12px;color:#6d6d6d;letter-spacing:-0.36px;">25/03/2020 20:30</div>
<div class="t" style="left:422px;top:473px;font-size:12px;color:#6d6d6d;letter-spacing:-0.21px;">Carpeta de archivos</div>
<svg class="s" style="left:20px;top:491px;" width="13" height="16" viewBox="0 0 13 16"><rect x="0.5" y="0.5" width="11" height="15" fill="#fde89a" stroke="#e8c246"/><rect x="9.5" y="9.5" width="3" height="6" fill="#fde08a" stroke="#e8c246" stroke-width="1"/></svg>
<div class="t" style="left:38px;top:494px;font-size:12px;color:#000;letter-spacing:-0.82px;">NSE 2.0</div>
<div class="t" style="left:278px;top:494px;font-size:12px;color:#6d6d6d;letter-spacing:-0.36px;">25/03/2020 20:30</div>
<div class="t" style="left:422px;top:494px;font-size:12px;color:#6d6d6d;letter-spacing:-0.21px;">Carpeta de archivos</div>
</div>
<div class="r" style="left:1350px;top:181px;width:16px;height:524px;background:#f0f0f0;"></div>
<svg class="s" style="left:1350px;top:181px;" width="16" height="17" viewBox="0 0 16 17"><path d="M4.3 11.3 L7.5 7 L10.7 11.3" fill="none" stroke="#555" stroke-width="1.7"/></svg>
<div class="r" style="left:1350px;top:198px;width:15px;height:266px;background:#cdcdcd;"></div>
<svg class="s" style="left:1350px;top:688px;" width="16" height="17" viewBox="0 0 16 17"><path d="M4.3 6.5 L7.5 10.8 L10.7 6.5" fill="none" stroke="#555" stroke-width="1.7"/></svg>
<div class="t" style="left:14px;top:711px;font-size:12px;color:#1f1f1f;letter-spacing:-0.1px;">43 elementos</div>
<div class="r" style="left:95px;top:711px;width:1px;height:11px;background:#e5e5e5;"></div>
<div class="r" style="left:1318px;top:705px;width:22px;height:23px;background:#cce8ff;border:1px solid #26a0da;box-sizing:border-box;"></div>
<svg class="s" style="left:1320px;top:709px;" width="20" height="15" viewBox="0 0 20 15"><g fill="#fff" stroke="#8a8a8a"><rect x="2.5" y="1.5" width="4" height="4"/><rect x="2.5" y="5.5" width="4" height="4"/><rect x="2.5" y="9.5" width="4" height="4"/></g><rect x="4" y="3" width="1" height="1" fill="#3a7"/><rect x="4" y="7" width="1" height="1" fill="#37c"/><rect x="4" y="11" width="1" height="1" fill="#d33"/><path d="M8 3.5 H12 M14 3.5 H18 M8 7.5 H12 M14 7.5 H18 M8 11.5 H12 M14 11.5 H18" stroke="#6d6d6d"/></svg>
<svg class="s" style="left:1344px;top:710px;" width="14" height="11" viewBox="0 0 14 11"><rect x="0.5" y="0.5" width="13" height="10" fill="#fff" stroke="#8a8a8a"/><rect x="2" y="2" width="10" height="7" fill="#7fb4e6"/><path d="M2 7 Q6 4.5 12 6.5 V9 H2 Z" fill="#2f6e50"/></svg>
<div class="t" style="left:1036px;top:652px;font-size:20px;color:#c8c8c8;letter-spacing:-0.1px;">Activar Windows</div>
<div class="t" style="left:1036px;top:677px;font-size:15px;color:#c6c6c6;letter-spacing:-0.12px;">Ve a Configuración para activar Windows.</div>
<div class="r" style="left:750px;top:91px;width:562px;height:166px;box-shadow:0 3px 11px rgba(0,0,0,0.3);background:#1c1c1c;border:1px solid #a0a0a0;box-sizing:border-box"></div>
<div class="r" style="left:751px;top:92px;width:560px;height:30px;background:#fff;"></div>
<svg class="s" style="left:759px;top:102px;" width="16" height="9" viewBox="0 0 16 9"><rect x="0" y="0" width="16" height="9" fill="#2e7fd6"/><g fill="#fff"><rect x="2" y="2" width="1.5" height="1.2"/><rect x="4.5" y="2" width="1.5" height="1.2"/><rect x="7" y="2" width="1.5" height="1.2"/><rect x="9.5" y="2" width="1.5" height="1.2"/><rect x="12" y="2" width="1.5" height="1.2"/><rect x="2" y="4" width="1.5" height="1.2"/><rect x="4.5" y="4" width="1.5" height="1.2"/><rect x="7" y="4" width="1.5" height="1.2"/><rect x="9.5" y="4" width="1.5" height="1.2"/><rect x="12" y="4" width="1.5" height="1.2"/><rect x="4" y="6.2" width="8" height="1.3"/></g></svg>
<div class="t" style="left:780px;top:101px;font-size:12px;color:#9a9a9a;letter-spacing:-0.17px;">Teclado en pantalla</div>
<div class="r" style="left:1192px;top:106px;width:11px;height:1px;background:#9a9a9a;"></div>
<div class="r" style="left:1237px;top:101px;width:10px;height:10px;background:transparent;border:1px solid #d0d0d0;box-sizing:border-box;"></div>
<svg class="s" style="left:1282px;top:100px;" width="12" height="12" viewBox="0 0 12 12"><path d="M1 1 L11 11 M11 1 L1 11" stroke="#7a7a7a" stroke-width="1.1"/></svg>
<div class="r" style="left:751px;top:122px;width:560px;height:134px;background:#1a1a1a;"></div>
<div class="r" style="left:752px;top:145px;width:21px;height:22px;background:#333333;"></div>
<div class="r" style="left:774px;top:145px;width:21px;height:22px;background:#333333;"></div>
<div class="r" style="left:796px;top:145px;width:21px;height:22px;background:#333333;"></div>
<div class="r" style="left:818px;top:145px;width:21px;height:22px;background:#333333;"></div>
<div class="r" style="left:840px;top:145px;width:21px;height:22px;background:#333333;"></div>
<div class="r" style="left:862px;top:145px;width:21px;height:22px;background:#333333;"></div>
<div class="r" style="left:884px;top:145px;width:21px;height:22px;background:#333333;"></div>
<div class="r" style="left:906px;top:145px;width:21px;height:22px;background:#333333;"></div>
<div class="r" style="left:928px;top:145px;width:21px;height:22px;background:#333333;"></div>
<div class="r" style="left:950px;top:145px;width:21px;height:22px;background:#333333;"></div>
<div class="r" style="left:972px;top:145px;width:21px;height:22px;background:#333333;"></div>
<div class="r" style="left:994px;top:145px;width:21px;height:22px;background:#333333;"></div>
<div class="r" style="left:1016px;top:145px;width:21px;height:22px;background:#333333;"></div>
<div class="r" style="left:1038px;top:145px;width:21px;height:22px;background:#333333;"></div>
<div class="r" style="left:1060px;top:145px;width:40px;height:22px;background:#333333;"></div>
<div class="t" style="left:757px;top:147px;font-size:7px;color:#bbbbbb;letter-spacing:-0.3px;">Esc</div>
<div class="t" style="left:776px;top:147px;font-size:9px;color:#9a9a9a;">a</div>
<div class="t" style="left:784px;top:152px;font-size:9px;color:#ffffff;">o</div>
<div class="t" style="left:798px;top:148px;font-size:11px;color:#9a9a9a;">!</div>
<div class="t" style="left:807px;top:152px;font-size:13px;color:#ffffff;">1</div>
<div class="t" style="left:821px;top:151px;font-size:10px;color:#9a9a9a;">&quot;</div>
<div class="t" style="left:829px;top:152px;font-size:13px;color:#ffffff;">2</div>
<div class="t" style="left:843px;top:151px;font-size:10px;color:#9a9a9a;">·</div>
<div class="t" style="left:851px;top:152px;font-size:13px;color:#ffffff;">3</div>
<div class="t" style="left:865px;top:147px;font-size:11px;color:#9a9a9a;">$</div>
<div class="t" style="left:873px;top:152px;font-size:13px;color:#ffffff;">4</div>
<div class="t" style="left:887px;top:147px;font-size:11px;color:#9a9a9a;">%</div>
<div class="t" style="left:895px;top:152px;font-size:13px;color:#ffffff;">5</div>
<div class="t" style="left:909px;top:147px;font-size:11px;color:#9a9a9a;">&amp;</div>
<div class="t" style="left:917px;top:152px;font-size:13px;color:#ffffff;">6</div>
<div class="t" style="left:931px;top:147px;font-size:11px;color:#9a9a9a;">/</div>
<div class="t" style="left:939px;top:152px;font-size:13px;color:#ffffff;">7</div>
<div class="t" style="left:953px;top:147px;font-size:11px;color:#9a9a9a;">(</div>
<div class="t" style="left:961px;top:152px;font-size:13px;color:#ffffff;">8</div>
<div class="t" style="left:975px;top:147px;font-size:11px;color:#9a9a9a;">)</div>
<div class="t" style="left:983px;top:152px;font-size:13px;color:#ffffff;">9</div>
<div class="t" style="left:997px;top:147px;font-size:11px;color:#9a9a9a;">=</div>
<div class="t" style="left:1005px;top:152px;font-size:13px;color:#ffffff;">0</div>
<div class="t" style="left:1019px;top:147px;font-size:11px;color:#9a9a9a;">?</div>
<div class="t" style="left:1028px;top:148px;font-size:9px;color:#9a9a9a;">&#x27;</div>
<div class="t" style="left:1041px;top:147px;font-size:11px;color:#9a9a9a;">¿</div>
<div class="t" style="left:1049px;top:154px;font-size:12px;color:#ffffff;">¡</div>
<svg class="s" style="left:1065px;top:148px;" width="15" height="11" viewBox="0 0 15 11"><path d="M4.5 1 H14 V10 H4.5 L0.8 5.5 Z" fill="none" stroke="#fff" stroke-width="1.1"/><path d="M7 3 L11 8 M11 3 L7 8" stroke="#fff" stroke-width="1.1"/></svg>
<div class="r" style="left:752px;top:168px;width:32px;height:21px;background:#333333;"></div>
<div class="t" style="left:757px;top:171px;font-size:12px;color:#ffffff;">Tab</div>
<div class="r" style="left:785px;top:168px;width:21px;height:21px;background:#333333;"></div>
<div class="t" style="left:790px;top:170px;font-size:13px;color:#ffffff;">q</div>
<div class="r" style="left:807px;top:168px;width:21px;height:21px;background:#333333;"></div>
<div class="t" style="left:811px;top:170px;font-size:13px;color:#ffffff;">w</div>
<div class="r" style="left:829px;top:168px;width:21px;height:21px;background:#333333;"></div>
<div class="t" style="left:834px;top:170px;font-size:13px;color:#ffffff;">e</div>
<div class="r" style="left:851px;top:168px;width:21px;height:21px;background:#333333;"></div>
<div class="t" style="left:856px;top:170px;font-size:13px;color:#ffffff;">r</div>
<div class="r" style="left:873px;top:168px;width:21px;height:21px;background:#333333;"></div>
<div class="t" style="left:878px;top:170px;font-size:13px;color:#ffffff;">t</div>
<div class="r" style="left:895px;top:168px;width:21px;height:21px;background:#333333;"></div>
<div class="t" style="left:900px;top:170px;font-size:13px;color:#ffffff;">y</div>
<div class="r" style="left:917px;top:168px;width:21px;height:21px;background:#333333;"></div>
<div class="t" style="left:922px;top:170px;font-size:13px;color:#ffffff;">u</div>
<div class="r" style="left:939px;top:168px;width:21px;height:21px;background:#333333;"></div>
<div class="t" style="left:944px;top:170px;font-size:13px;color:#ffffff;">i</div>
<div class="r" style="left:961px;top:168px;width:21px;height:21px;background:#333333;"></div>
<div class="t" style="left:966px;top:170px;font-size:13px;color:#ffffff;">o</div>
<div class="r" style="left:983px;top:168px;width:21px;height:21px;background:#333333;"></div>
<div class="t" style="left:988px;top:170px;font-size:13px;color:#ffffff;">p</div>
<div class="r" style="left:1005px;top:168px;width:21px;height:21px;background:#333333;"></div>
<div class="t" style="left:1007px;top:173px;font-size:11px;color:#9a9a9a;">^</div>
<div class="t" style="left:1015px;top:176px;font-size:11px;color:#9a9a9a;">`</div>
<div class="r" style="left:1027px;top:168px;width:21px;height:21px;background:#333333;"></div>
<div class="t" style="left:1029px;top:173px;font-size:10px;color:#9a9a9a;">*</div>
<div class="t" style="left:1037px;top:175px;font-size:12px;color:#ffffff;">+</div>
<div class="r" style="left:1049px;top:168px;width:51px;height:22px;background:#333333;"></div>
<div class="r" style="left:1058px;top:190px;width:42px;height:21px;background:#333333;"></div>
<div class="t" style="left:1062px;top:173px;font-size:12px;color:#ffffff;letter-spacing:-0.15px;">Entrar</div>
<div class="r" style="left:752px;top:190px;width:41px;height:21px;background:#333333;"></div>
<div class="r" style="left:752px;top:190px;width:41px;height:21px;overflow:hidden">
<div class="t" style="left:5px;top:3px;font-size:12px;color:#ffffff;letter-spacing:-0.2px;">Bloq Mayús</div></div>
<div class="r" style="left:794px;top:190px;width:21px;height:21px;background:#333333;"></div>
<div class="t" style="left:799px;top:192px;font-size:13px;color:#ffffff;">a</div>
<div class="r" style="left:816px;top:190px;width:21px;height:21px;background:#333333;"></div>
<div class="t" style="left:821px;top:192px;font-size:13px;color:#ffffff;">s</div>
<div class="r" style="left:838px;top:190px;width:21px;height:21px;background:#333333;"></div>
<div class="t" style="left:843px;top:192px;font-size:13px;color:#ffffff;">d</div>
<div class="r" style="left:860px;top:190px;width:21px;height:21px;background:#333333;"></div>
<div class="t" style="left:865px;top:192px;font-size:13px;color:#ffffff;">f</div>
<div class="r" style="left:882px;top:190px;width:21px;height:21px;background:#333333;"></div>
<div class="t" style="left:887px;top:192px;font-size:13px;color:#ffffff;">g</div>
<div class="r" style="left:904px;top:190px;width:21px;height:21px;background:#333333;"></div>
<div class="t" style="left:909px;top:192px;font-size:13px;color:#ffffff;">h</div>
<div class="r" style="left:926px;top:190px;width:21px;height:21px;background:#333333;"></div>
<div class="t" style="left:931px;top:192px;font-size:13px;color:#ffffff;">j</div>
<div class="r" style="left:948px;top:190px;width:21px;height:21px;background:#333333;"></div>
<div class="t" style="left:953px;top:192px;font-size:13px;color:#ffffff;">k</div>
<div class="r" style="left:970px;top:190px;width:21px;height:21px;background:#333333;"></div>
<div class="t" style="left:975px;top:192px;font-size:13px;color:#ffffff;">l</div>
<div class="r" style="left:992px;top:190px;width:21px;height:21px;background:#333333;"></div>
<div class="t" style="left:997px;top:192px;font-size:13px;color:#ffffff;">ñ</div>
<div class="r" style="left:1014px;top:190px;width:21px;height:21px;background:#333333;"></div>
<div class="t" style="left:1016px;top:196px;font-size:10px;color:#9a9a9a;">¨</div>
<div class="t" style="left:1024px;top:198px;font-size:11px;color:#ffffff;">´</div>
<div class="r" style="left:1036px;top:190px;width:21px;height:21px;background:#333333;"></div>
<div class="t" style="left:1043px;top:192px;font-size:13px;color:#ffffff;">ç</div>
<div class="r" style="left:752px;top:212px;width:32px;height:21px;background:#333333;"></div>
<div class="r" style="left:752px;top:212px;width:32px;height:21px;overflow:hidden">
<div class="t" style="left:5px;top:3px;font-size:12px;color:#ffffff;letter-spacing:-0.1px;">Mayús</div></div>
<div class="r" style="left:785px;top:212px;width:21px;height:21px;background:#333333;"></div>
<div class="t" style="left:788px;top:212px;font-size:10px;color:#9a9a9a;">&gt;</div>
<div class="t" style="left:795px;top:219px;font-size:11px;color:#ffffff;">&lt;</div>
<div class="r" style="left:807px;top:212px;width:21px;height:21px;background:#333333;"></div>
<div class="t" style="left:812px;top:214px;font-size:13px;color:#ffffff;">z</div>
<div class="r" style="left:829px;top:212px;width:21px;height:21px;background:#333333;"></div>
<div class="t" style="left:834px;top:214px;font-size:13px;color:#ffffff;">x</div>
<div class="r" style="left:851px;top:212px;width:21px;height:21px;background:#333333;"></div>
<div class="t" style="left:856px;top:214px;font-size:13px;color:#ffffff;">c</div>
<div class="r" style="left:873px;top:212px;width:21px;height:21px;background:#333333;"></div>
<div class="t" style="left:878px;top:214px;font-size:13px;color:#ffffff;">v</div>
<div class="r" style="left:895px;top:212px;width:21px;height:21px;background:#333333;"></div>
<div class="t" style="left:900px;top:214px;font-size:13px;color:#ffffff;">b</div>
<div class="r" style="left:917px;top:212px;width:21px;height:21px;background:#333333;"></div>
<div class="t" style="left:922px;top:214px;font-size:13px;color:#ffffff;">n</div>
<div class="r" style="left:939px;top:212px;width:21px;height:21px;background:#333333;"></div>
<div class="t" style="left:943px;top:214px;font-size:13px;color:#ffffff;">m</div>
<div class="r" style="left:961px;top:212px;width:21px;height:21px;background:#333333;"></div>
<div class="t" style="left:962px;top:217px;font-size:10px;color:#9a9a9a;">;</div>
<div class="t" style="left:970px;top:218px;font-size:12px;color:#ffffff;">,</div>
<div class="r" style="left:983px;top:212px;width:21px;height:21px;background:#333333;"></div>
<div class="t" style="left:984px;top:215px;font-size:10px;color:#9a9a9a;">:</div>
<div class="t" style="left:993px;top:218px;font-size:12px;color:#ffffff;">.</div>
<div class="r" style="left:1005px;top:212px;width:21px;height:21px;background:#333333;"></div>
<div class="t" style="left:1007px;top:216px;font-size:10px;color:#9a9a9a;">_</div>
<div class="t" style="left:1015px;top:218px;font-size:12px;color:#ffffff;">-</div>
<div class="r" style="left:1027px;top:212px;width:21px;height:21px;background:#333333;"></div>
<svg class="s" style="left:1032px;top:215px;" width="12" height="8" viewBox="0 0 12 8"><path d="M1 7 L6 1.5 L11 7" fill="none" stroke="#fff" stroke-width="1.2"/></svg>
<div class="r" style="left:1049px;top:212px;width:21px;height:21px;background:#333333;"></div>
<div class="r" style="left:1049px;top:212px;width:21px;height:21px;overflow:hidden">
<div class="t" style="left:4px;top:3px;font-size:12px;color:#ffffff;letter-spacing:-0.1px;">Mayús</div></div>
<div class="r" style="left:1071px;top:212px;width:29px;height:21px;background:#333333;"></div>
<div class="r" style="left:1071px;top:212px;width:29px;height:21px;overflow:hidden">
<div class="t" style="left:3px;top:3px;font-size:12px;color:#ffffff;letter-spacing:-0.2px;">Supr</div></div>
<div class="r" style="left:752px;top:234px;width:21px;height:21px;background:#333333;"></div>
<div class="t" style="left:758px;top:237px;font-size:12px;color:#ffffff;letter-spacing:-0.2px;">Fn</div>
<div class="r" style="left:774px;top:234px;width:21px;height:21px;background:#333333;"></div>
<div class="r" style="left:774px;top:234px;width:21px;height:21px;overflow:hidden">
<div class="t" style="left:5px;top:3px;font-size:12px;color:#ffffff;letter-spacing:-0.3px;">Ctrl</div></div>
<div class="r" style="left:796px;top:234px;width:21px;height:21px;background:#333333;"></div>
<svg class="s" style="left:799px;top:237px;" width="14" height="14" viewBox="0 0 14 14"><g fill="#fff"><rect x="0" y="0" width="6.3" height="6.3"/><rect x="7.3" y="0" width="6.3" height="6.3"/><rect x="0" y="7.3" width="6.3" height="6.3"/><rect x="7.3" y="7.3" width="6.3" height="6.3"/></g></svg>
<div class="r" style="left:818px;top:234px;width:21px;height:21px;background:#0078d7;"></div>
<div class="t" style="left:822px;top:237px;font-size:12px;color:#ffffff;letter-spacing:-0.2px;">Alt</div>
<div class="r" style="left:840px;top:234px;width:122px;height:21px;background:#333333;"></div>
<div class="r" style="left:963px;top:234px;width:21px;height:21px;background:#333333;"></div>
<div class="r" style="left:963px;top:234px;width:21px;height:21px;overflow:hidden">
<div class="t" style="left:5px;top:3px;font-size:12px;color:#ffffff;letter-spacing:-0.3px;">AltGr</div></div>
<div class="r" style="left:985px;top:234px;width:21px;height:21px;background:#333333;"></div>
<div class="r" style="left:985px;top:234px;width:21px;height:21px;overflow:hidden">
<div class="t" style="left:5px;top:3px;font-size:12px;color:#ffffff;letter-spacing:-0.3px;">Ctrl</div></div>
<div class="r" style="left:1007px;top:234px;width:21px;height:21px;background:#333333;"></div>
<svg class="s" style="left:1011px;top:238px;" width="10" height="14" viewBox="0 0 10 14"><path d="M7.5 1 L2 7 L7.5 13" fill="none" stroke="#fff" stroke-width="1.2"/></svg>
<div class="r" style="left:1029px;top:234px;width:21px;height:21px;background:#333333;"></div>
<svg class="s" style="left:1033px;top:239px;" width="14" height="9" viewBox="0 0 14 9"><path d="M1 1.5 L7 7.5 L13 1.5" fill="none" stroke="#fff" stroke-width="1.2"/></svg>
<div class="r" style="left:1051px;top:234px;width:21px;height:21px;background:#333333;"></div>
<svg class="s" style="left:1056px;top:238px;" width="10" height="14" viewBox="0 0 10 14"><path d="M2 1 L7.5 7 L2 13" fill="none" stroke="#fff" stroke-width="1.2"/></svg>
<div class="r" style="left:1073px;top:234px;width:27px;height:21px;background:#333333;"></div>
<svg class="s" style="left:1080px;top:237px;" width="12" height="14" viewBox="0 0 12 14"><rect x="1" y="1" width="10" height="12" fill="none" stroke="#fff" stroke-width="1.3"/><path d="M1 4 H11 M3.5 7.5 H8.5 M3.5 10 H8.5" stroke="#fff" stroke-width="1.1"/></svg>
<div class="r" style="left:1106px;top:145px;width:66px;height:22px;background:#333333;"></div>
<div class="t" style="left:1111px;top:148px;font-size:12px;color:#ffffff;letter-spacing:0.39px;">Inicio</div>
<div class="r" style="left:1173px;top:145px;width:67px;height:22px;background:#333333;"></div>
<div class="t" style="left:1178px;top:148px;font-size:12px;color:#ffffff;letter-spacing:0.17px;">Re Pág</div>
<div class="r" style="left:1242px;top:145px;width:68px;height:22px;background:#333333;"></div>
<div class="t" style="left:1247px;top:148px;font-size:12px;color:#ffffff;letter-spacing:0.75px;">Nav</div>
<div class="r" style="left:1106px;top:168px;width:66px;height:21px;background:#333333;"></div>
<div class="t" style="left:1111px;top:171px;font-size:12px;color:#ffffff;letter-spacing:-0.35px;">Fin</div>
<div class="r" style="left:1173px;top:168px;width:67px;height:21px;background:#333333;"></div>
<div class="t" style="left:1178px;top:171px;font-size:12px;color:#ffffff;letter-spacing:-0.19px;">Av Pág</div>
<div class="r" style="left:1242px;top:168px;width:68px;height:21px;background:#333333;"></div>
<div class="t" style="left:1247px;top:171px;font-size:12px;color:#ffffff;letter-spacing:-0.4px;">Subir</div>
<div class="r" style="left:1106px;top:190px;width:66px;height:21px;background:#333333;"></div>
<div class="t" style="left:1111px;top:193px;font-size:12px;color:#ffffff;letter-spacing:-0.32px;">Insertar</div>
<div class="r" style="left:1173px;top:190px;width:67px;height:21px;background:#333333;"></div>
<div class="t" style="left:1178px;top:193px;font-size:12px;color:#ffffff;letter-spacing:-1.08px;">Pausa</div>
<div class="r" style="left:1242px;top:190px;width:68px;height:21px;background:#333333;"></div>
<div class="t" style="left:1247px;top:193px;font-size:12px;color:#ffffff;letter-spacing:-0.67px;">Bajar</div>
<div class="r" style="left:1106px;top:212px;width:66px;height:21px;background:#e6e6e6;"></div>
<div class="t" style="left:1111px;top:215px;font-size:12px;color:#000;letter-spacing:-0.04px;">Impr Pant</div>
<div class="r" style="left:1173px;top:212px;width:67px;height:21px;background:#333333;"></div>
<div class="t" style="left:1178px;top:215px;font-size:12px;color:#ffffff;letter-spacing:-0.16px;">Bloq Despl</div>
<div class="r" style="left:1242px;top:212px;width:68px;height:21px;background:#333333;"></div>
<div class="t" style="left:1247px;top:215px;font-size:12px;color:#7a7a7a;letter-spacing:0.35px;">Acoplar</div>
<div class="r" style="left:1106px;top:234px;width:66px;height:21px;background:#333333;"></div>
<div class="t" style="left:1111px;top:237px;font-size:12px;color:#ffffff;letter-spacing:-0.15px;">Opciones</div>
<div class="r" style="left:1173px;top:234px;width:67px;height:21px;background:#333333;"></div>
<div class="t" style="left:1178px;top:237px;font-size:12px;color:#ffffff;letter-spacing:-0.05px;">Ayuda</div>
<div class="r" style="left:1242px;top:234px;width:68px;height:21px;background:#333333;"></div>
<div class="t" style="left:1247px;top:237px;font-size:12px;color:#ffffff;letter-spacing:0.0px;">Atenuar</div>
</body></html>
